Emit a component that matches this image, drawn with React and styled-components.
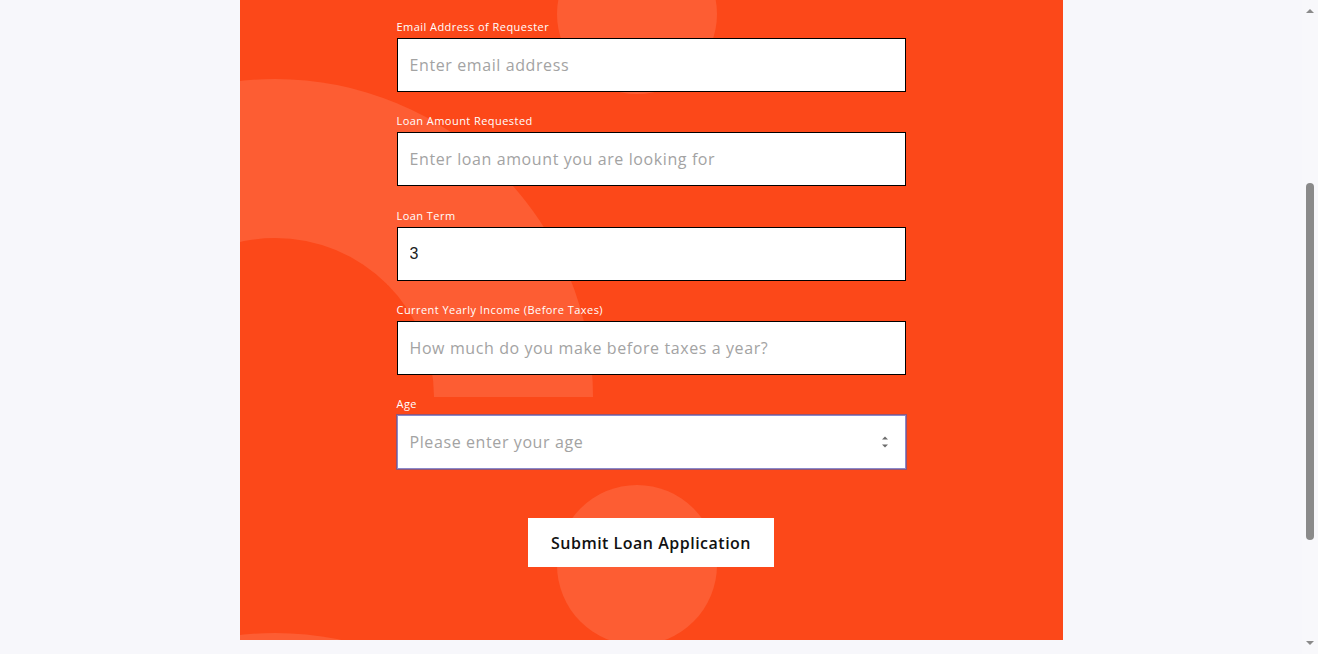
import React, { useLayoutEffect } from "react";
import styled, { createGlobalStyle } from "styled-components";

const Global = createGlobalStyle`
  html { scroll-behavior: auto; background: #f7f7fb; }
  body {
    margin: 0;
    background: #f7f7fb;
    font-family: "Open Sans", "Liberation Sans", sans-serif;
  }
  ::-webkit-scrollbar { width: 0; height: 0; }
`;

const Page = styled.div`
  padding-right: 16px;
  padding-bottom: 193px;
`;

const Scrollbar = styled.div`
  position: fixed;
  top: 0;
  right: 0;
  width: 16px;
  height: 100vh;
  background: #f8f8fb;
  z-index: 10;
`;

const ScrollArrow = styled.span`
  position: absolute;
  left: 4px;
  width: 0;
  height: 0;
  border-left: 4px solid transparent;
  border-right: 4px solid transparent;
  ${(p) =>
    p.$down
      ? "bottom: 9px; border-top: 4px solid #8a8a8a;"
      : "top: 9px; border-bottom: 4px solid #8a8a8a;"}
`;

const Thumb = styled.span`
  position: absolute;
  left: 4px;
  top: 183px;
  width: 8px;
  height: 357px;
  border-radius: 4px;
  background: #8a8a8a;
`;

const Panel = styled.section`
  position: relative;
  overflow: hidden;
  width: 823px;
  margin: 0 auto;
  background: #fc4819;
  padding: 41.25px 0 73px;
  box-sizing: border-box;
  height: 946px;
`;

const HalfRing = styled.div`
  position: absolute;
  left: -283px;
  top: ${(p) => p.$top}px;
  width: 636px;
  height: 318px;
  box-sizing: border-box;
  border: 159px solid #fd5d33;
  border-bottom: 0;
  border-radius: 318px 318px 0 0;
`;

const Bubble = styled.div`
  position: absolute;
  left: ${(p) => p.$left}px;
  top: ${(p) => p.$top}px;
  width: 160px;
  height: 160px;
  border-radius: 50%;
  background: #fd5d33;
`;

const Form = styled.form`
  position: relative;
  width: 509px;
  margin: 0 auto;
  display: flex;
  flex-direction: column;
  align-items: stretch;
  gap: 20.25px;
`;

const Field = styled.div`
  display: flex;
  flex-direction: column;
`;

const Label = styled.label`
  display: block;
  color: #ffffff;
  font-size: 11px;
  line-height: 16px;
  padding-top: 1px;
  font-weight: 500;
  letter-spacing: 0.45px;
  margin-bottom: 3px;
`;

const InputWrap = styled.div`
  position: relative;
`;

const Input = styled.input`
  display: block;
  width: 100%;
  height: 54px;
  box-sizing: border-box;
  margin: 0;
  padding: 0 12px;
  border: 1px solid ${(p) => (p.$focused ? "#8b89c9" : "#000000")};
  box-shadow: ${(p) => (p.$focused ? "0 0 0 1px rgba(110, 90, 150, 0.75)" : "none")};
  background: #ffffff;
  font-family: ${(p) =>
    p.$plain ? '"Liberation Sans", Arial, sans-serif' : '"Open Sans", "Liberation Sans", sans-serif'};
  font-size: 16px;
  letter-spacing: ${(p) => (p.$plain ? "0" : "0.6px")};
  color: #1c1c1c;
  outline: none;
  &::placeholder {
    color: #a3a3a3;
    opacity: 1;
  }
`;

const Spinner = styled.span`
  position: absolute;
  right: 18px;
  top: 50%;
  transform: translateY(-50%);
  display: flex;
  flex-direction: column;
  align-items: center;
  gap: 5px;
  pointer-events: none;
`;

const Arrow = styled.span`
  width: 0;
  height: 0;
  border-left: 3px solid transparent;
  border-right: 3px solid transparent;
  ${(p) =>
    p.$down
      ? "border-top: 3px solid #6b6b6b;"
      : "border-bottom: 3px solid #6b6b6b;"}
`;

const ButtonRow = styled.div`
  display: flex;
  justify-content: center;
  margin-top: 28.75px;
`;

const SubmitButton = styled.button`
  height: 49px;
  padding: 0 23px;
  border: 0;
  background: #ffffff;
  color: #111111;
  font-family: "Open Sans", "Liberation Sans", sans-serif;
  font-weight: 600;
  font-size: 16px;
  letter-spacing: 0.5px;
  cursor: pointer;
`;

const hiddenFields = [
  { id: "name", label: "Full Name of Requester", placeholder: "Enter your full name" },
  { id: "phone", label: "Phone Number of Requester", placeholder: "Enter phone number" },
  { id: "company", label: "Business Name", placeholder: "Enter business name" },
];

const fields = [
  { id: "email", label: "Email Address of Requester", placeholder: "Enter email address" },
  { id: "amount", label: "Loan Amount Requested", placeholder: "Enter loan amount you are looking for" },
  { id: "term", label: "Loan Term", value: "3", plain: true },
  { id: "income", label: "Current Yearly Income (Before Taxes)", placeholder: "How much do you make before taxes a year?" },
  { id: "age", label: "Age", placeholder: "Please enter your age", focused: true, spinner: true },
];

export default function App() {
  useLayoutEffect(() => {
    window.scrollTo(0, 306);
  }, []);

  return (
    <Page>
      <Global />
      <Panel>
        <HalfRing $top={385} />
        <HalfRing $top={939} />
        <Bubble $left={317} $top={240} />
        <Bubble $left={317} $top={791} />
        <Form onSubmit={(e) => e.preventDefault()}>
          {[...hiddenFields, ...fields].map((f) => (
            <Field key={f.id}>
              <Label htmlFor={f.id}>{f.label}</Label>
              <InputWrap>
                <Input
                  id={f.id}
                  placeholder={f.placeholder}
                  defaultValue={f.value}
                  $plain={f.plain}
                  $focused={f.focused}
                />
                {f.spinner && (
                  <Spinner>
                    <Arrow />
                    <Arrow $down />
                  </Spinner>
                )}
              </InputWrap>
            </Field>
          ))}
          <ButtonRow>
            <SubmitButton type="submit">Submit Loan Application</SubmitButton>
          </ButtonRow>
        </Form>
      </Panel>
      <Scrollbar aria-hidden="true">
        <ScrollArrow />
        <Thumb />
        <ScrollArrow $down />
      </Scrollbar>
    </Page>
  );
}
